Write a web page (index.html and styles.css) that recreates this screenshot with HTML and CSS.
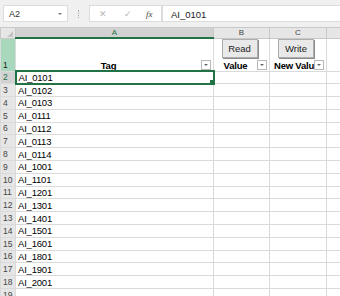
FILE: index.html
```html
<!DOCTYPE html>
<html lang="en">
<head>
    <meta charset="UTF-8">
    <title>Tags</title>
    <link rel="stylesheet" href="styles.css">
</head>
<body>
    <div class="formula-bar">
        <div class="name-box">A2<span class="caret"></span></div>
        <div class="grip"></div>
        <div class="fx-box">
            <span class="fx-icon">&#x2715;</span>
            <span class="fx-icon">&#x2713;</span>
            <span class="fx-label">fx</span>
        </div>
        <div class="formula-input">AI_0101</div>
    </div>

    <table class="sheet">
        <colgroup>
            <col class="col-head">
            <col class="col-a">
            <col class="col-b">
            <col class="col-c">
            <col>
        </colgroup>
        <tr class="col-headers">
            <th class="corner"><span class="corner-tri"></span></th>
            <th class="active-col">A</th>
            <th>B</th>
            <th>C</th>
            <th></th>
        </tr>
        <tr class="title-row">
            <th class="row-num green">1</th>
            <td>
                <div class="title-cell">
                    <span class="title-text">Tag</span>
                    <span class="filter"></span>
                </div>
            </td>
            <td>
                <div class="title-stack">
                    <button class="sheet-btn">Read</button>
                    <div class="title-cell">
                        <span class="title-text">Value</span>
                        <span class="filter"></span>
                    </div>
                </div>
            </td>
            <td>
                <div class="title-stack">
                    <button class="sheet-btn">Write</button>
                    <div class="title-cell clip">
                        <span class="title-text">New Valu</span>
                        <span class="filter"></span>
                    </div>
                </div>
            </td>
            <td></td>
        </tr>
        <tr><th class="row-num active-row">2</th><td class="selected">AI_0101</td><td></td><td></td><td></td></tr>
        <tr><th class="row-num">3</th><td>AI_0102</td><td></td><td></td><td></td></tr>
        <tr><th class="row-num">4</th><td>AI_0103</td><td></td><td></td><td></td></tr>
        <tr><th class="row-num">5</th><td>AI_0111</td><td></td><td></td><td></td></tr>
        <tr><th class="row-num">6</th><td>AI_0112</td><td></td><td></td><td></td></tr>
        <tr><th class="row-num">7</th><td>AI_0113</td><td></td><td></td><td></td></tr>
        <tr><th class="row-num">8</th><td>AI_0114</td><td></td><td></td><td></td></tr>
        <tr><th class="row-num">9</th><td>AI_1001</td><td></td><td></td><td></td></tr>
        <tr><th class="row-num">10</th><td>AI_1101</td><td></td><td></td><td></td></tr>
        <tr><th class="row-num">11</th><td>AI_1201</td><td></td><td></td><td></td></tr>
        <tr><th class="row-num">12</th><td>AI_1301</td><td></td><td></td><td></td></tr>
        <tr><th class="row-num">13</th><td>AI_1401</td><td></td><td></td><td></td></tr>
        <tr><th class="row-num">14</th><td>AI_1501</td><td></td><td></td><td></td></tr>
        <tr><th class="row-num">15</th><td>AI_1601</td><td></td><td></td><td></td></tr>
        <tr><th class="row-num">16</th><td>AI_1801</td><td></td><td></td><td></td></tr>
        <tr><th class="row-num">17</th><td>AI_1901</td><td></td><td></td><td></td></tr>
        <tr><th class="row-num">18</th><td>AI_2001</td><td></td><td></td><td></td></tr>
        <tr><th class="row-num">19</th><td></td><td></td><td></td><td></td></tr>
    </table>
</body>
</html>
```

FILE: styles.css
```css
body {
    margin: 0;
    background: #ffffff;
    font-family: "Liberation Sans", Arial, sans-serif;
    font-size: 9px;
    color: #000;
    overflow: hidden;
}
.formula-bar {
    display: flex;
    align-items: center;
    height: 27px;
    padding: 0 0 0 3px;
    background: #f0f0f0;
    box-sizing: border-box;
}
.name-box {
    position: relative;
    width: 65px;
    height: 17px;
    line-height: 17px;
    padding-left: 5px;
    box-sizing: border-box;
    background: #fff;
    border: 1px solid #dcdcdc;
    font-size: 9px;
    color: #333;
}
.caret {
    position: absolute;
    right: 5px;
    top: 7px;
    border-left: 2px solid transparent;
    border-right: 2px solid transparent;
    border-top: 2px solid #777;
}
.grip {
    width: 1px;
    height: 8px;
    margin: 0 9px 0 10px;
    border-left: 1px dotted #aaa;
}
.fx-box {
    display: flex;
    align-items: center;
    width: 73px;
    height: 17px;
    background: #fff;
    border: 1px solid #dcdcdc;
    box-sizing: border-box;
}
.fx-icon {
    width: 25px;
    text-align: center;
    color: #b4b4b4;
    font-size: 9px;
}
.fx-label {
    margin-left: 6px;
    font-family: "Liberation Serif", serif;
    font-style: italic;
    font-size: 9px;
    color: #444;
}
.formula-input {
    flex: 1;
    height: 17px;
    line-height: 17px;
    padding-left: 8px;
    background: #fff;
    border: 1px solid #dcdcdc;
    border-right: none;
    box-sizing: border-box;
    font-size: 9.5px;
    color: #222;
}
.sheet {
    border-collapse: collapse;
    table-layout: fixed;
    width: 345px;
}
.col-head { width: 15px; }
.col-a { width: 198px; }
.col-b { width: 56px; }
.col-c { width: 57px; }
.sheet td,
.sheet th {
    border: 1px solid #dadada;
    padding: 0 0 0 2px;
    height: 12.8px;
    line-height: 11px;
    white-space: nowrap;
    overflow: hidden;
    box-sizing: border-box;
}
.sheet td {
    font-size: 9.5px;
    letter-spacing: -0.2px;
}
.col-headers th {
    height: 10px;
    padding: 0;
    background: #e6e6e6;
    border-color: #c8c8c8;
    font-weight: normal;
    font-size: 8px;
    color: #444;
    line-height: 9px;
    text-align: center;
}
.col-headers .corner {
    position: relative;
    background: #e6e6e6;
}
.corner-tri {
    position: absolute;
    right: 2px;
    bottom: 1px;
    border-left: 6px solid transparent;
    border-bottom: 6px solid #c4c4c4;
}
.col-headers .active-col {
    background: #d2d2d2;
    border-bottom: 2px solid #217346;
    color: #217346;
}
.row-num {
    background: #e6e6e6;
    border-color: #c8c8c8;
    font-weight: normal;
    font-size: 8.5px;
    color: #444;
    text-align: left;
    vertical-align: bottom;
}
.sheet .row-num {
    padding: 0 0 0 2px;
}
.row-num.green {
    background: #a9d9bd;
    color: #222;
}
.row-num.active-row {
    background: #d2d2d2;
    color: #217346;
    border-right: 2px solid #217346;
}
.title-row td {
    height: 32px;
    vertical-align: bottom;
    padding: 0;
}
.title-row th {
    height: 32px;
}
.title-stack {
    display: flex;
    flex-direction: column;
    align-items: center;
    gap: 2px;
}
.title-cell {
    display: flex;
    align-items: center;
    justify-content: center;
    position: relative;
    width: 100%;
    height: 11px;
    padding-right: 12px;
    box-sizing: border-box;
}
.title-text {
    font-weight: bold;
    font-size: 9.5px;
    letter-spacing: -0.2px;
}
.clip {
    justify-content: flex-start;
    padding-left: 4px;
}
.filter {
    position: absolute;
    right: 2px;
    top: 0;
    width: 10px;
    height: 10px;
    background: #fff;
    border: 1px solid #b8b8b8;
    box-sizing: border-box;
}
.filter::after {
    content: "";
    position: absolute;
    left: 2px;
    top: 3px;
    border-left: 2px solid transparent;
    border-right: 2px solid transparent;
    border-top: 2px solid #666;
}
.sheet-btn {
    width: 36px;
    height: 19px;
    margin-right: 4px;
    padding: 0;
    background: #e9e9e9;
    border: 1px solid #adadad;
    box-shadow: 1px 1px 0 #8c8c8c;
    font-family: "Liberation Sans", Arial, sans-serif;
    font-size: 9.5px;
    color: #222;
}
.sheet .selected {
    position: relative;
    outline: 2px solid #217346;
    outline-offset: -1px;
}
.selected::after {
    content: "";
    position: absolute;
    right: -2px;
    bottom: -2px;
    width: 4px;
    height: 4px;
    background: #217346;
    border: 1px solid #fff;
}
```
